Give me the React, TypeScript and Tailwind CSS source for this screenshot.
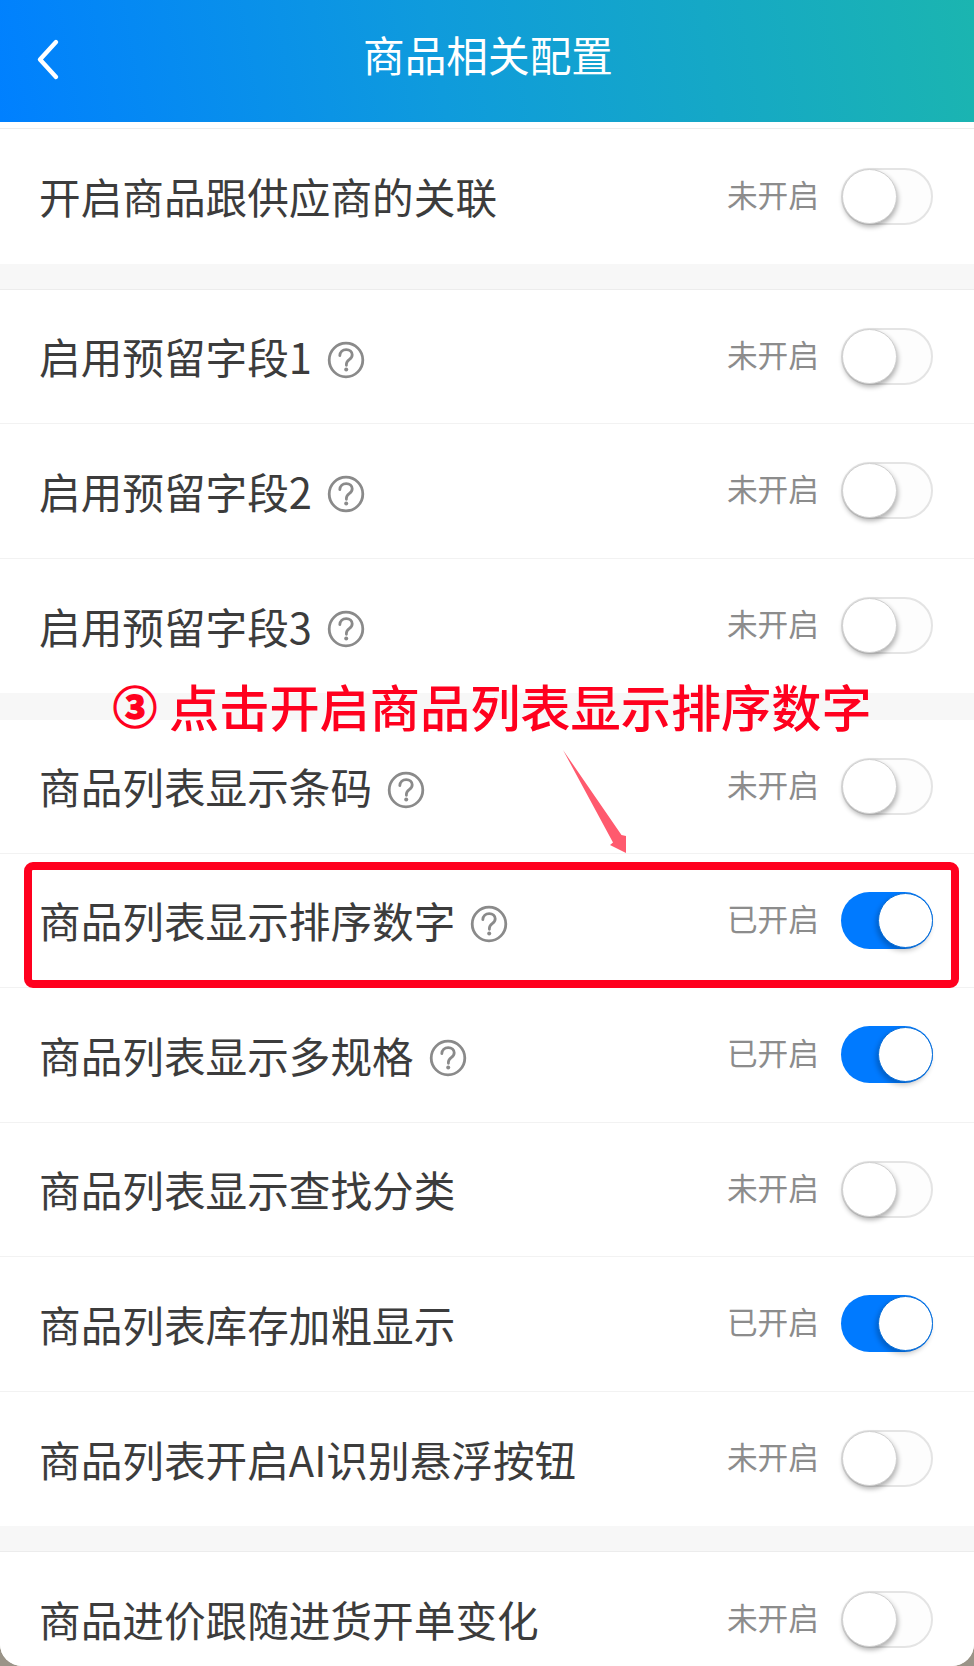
const FONT = "font-['Noto_Sans_CJK_SC','Noto_Sans',sans-serif]";

function Help() {
  return (
    <svg width="38" height="38" viewBox="0 0 38 38" fill="none" className="ml-[15px] mt-[7px] shrink-0">
      <circle cx="19" cy="19" r="16.8" stroke="#8a8a8a" strokeWidth="2.8" />
      <path d="M12.8 14.6c.2-3.7 2.8-6 6.4-6 3.5 0 6 2.2 6 5.2 0 2.3-1.2 3.6-3 4.9-1.9 1.4-2.8 2.4-2.8 4.6v1" stroke="#8a8a8a" strokeWidth="2.8" strokeLinecap="round" />
      <circle cx="19.2" cy="28.6" r="2" fill="#8a8a8a" />
    </svg>
  );
}

function Toggle({ on }: { on: boolean }) {
  if (on) {
    return (
      <div className="relative w-[92px] h-[57px] rounded-full bg-[#007aff] shrink-0">
        <div className="absolute right-0 top-[1px] w-[55px] h-[55px] rounded-full bg-white border border-[#0a6fd8] shadow-[-2px_3px_5px_rgba(0,0,0,0.22)]" />
      </div>
    );
  }
  return (
    <div className="relative w-[92px] h-[57px] rounded-full bg-[#fdfdfd] border-2 border-[#e4e4e4] shrink-0">
      <div className="absolute left-[-1px] top-[-1px] w-[55px] h-[55px] rounded-full bg-white border border-[#d0d0d0] shadow-[1px_3px_5px_rgba(0,0,0,0.3)]" />
    </div>
  );
}

function Row({ label, on, help, last, short, children }: { label: string; on?: boolean; help?: boolean; last?: boolean; short?: boolean; children?: React.ReactNode }) {
  return (
    <div className={`relative flex items-center ${short ? "h-[133.5px]" : "h-[134.5px]"} pl-[39px] pr-[41px] bg-white ${last ? "" : "border-b border-[#f2f2f2]"}`}>
      <span className="text-[41.65px] leading-none text-[#3c3c3c] mt-[2px]">{label}</span>
      {help && <Help />}
      <span className="ml-auto text-[30.7px] leading-none text-[#8c8c8c] mr-[22px] mt-[-4px]">{on ? "已开启" : "未开启"}</span>
      <Toggle on={!!on} />
      {children}
    </div>
  );
}

function Gap({ plain }: { plain?: boolean }) {
  return plain ? (
    <div className="h-[27px] bg-[#f7f7f7]" />
  ) : (
    <div className="h-[26px] bg-[#f7f7f7] border-b border-[#ececec]" />
  );
}

export default function App() {
  return (
    <div className={`relative w-[974px] h-[1666px] overflow-hidden bg-[#9a9488] ${FONT}`}>
      <div className="h-full rounded-b-[22px] overflow-hidden bg-white">
        <header className="relative flex items-center justify-center h-[122px] bg-[linear-gradient(80deg,#0080ff_0%,#0f9bdc_45%,#1bb5b0_100%)]">
          <svg width="30" height="44" viewBox="0 0 30 44" fill="none" className="absolute left-[33px] top-[37px]">
            <path d="M23 5 7 22.5 23 40" stroke="#fff" strokeWidth="4.4" strokeLinecap="round" strokeLinejoin="round" />
          </svg>
          <h1 className="text-[41.65px] leading-none font-normal text-white mt-[-12px] ml-[2px]">商品相关配置</h1>
        </header>
        <div className="h-[7px] bg-white border-b border-[#ececec]" />
        <Row label="开启商品跟供应商的关联" last />
        <Gap />
        <Row label="启用预留字段1" help />
        <Row label="启用预留字段2" help />
        <Row label="启用预留字段3" help last />
        <Gap plain />
        <Row label="商品列表显示条码" help short />
        <Row label="商品列表显示排序数字" help on>
          <div className="absolute left-[24px] right-[15px] top-[8px] bottom-[-1px] border-[8px] border-[#ff001e] rounded-[9px]" />
        </Row>
        <Row label="商品列表显示多规格" help on />
        <Row label="商品列表显示查找分类" />
        <Row label="商品列表库存加粗显示" on />
        <Row label="商品列表开启AI识别悬浮按钮" last />
        <Gap />
        <Row label="商品进价跟随进货开单变化" last />
      </div>

      <div className="absolute left-[113px] top-[680px] flex items-center text-[#ff001e]">
        <span className="text-[44px] leading-none font-bold w-[56px] [-webkit-text-stroke:1.4px_#ff001e]">③</span>
        <span className="text-[50.2px] leading-none font-medium">点击开启商品列表显示排序数字</span>
      </div>
      <svg width="80" height="120" viewBox="0 0 80 120" className="absolute left-[555px] top-[745px]">
        <polygon points="8,5 66.5,90 71,91 71,108 55,100 58,97.5" fill="#ff5a6e" />
      </svg>
    </div>
  );
}
